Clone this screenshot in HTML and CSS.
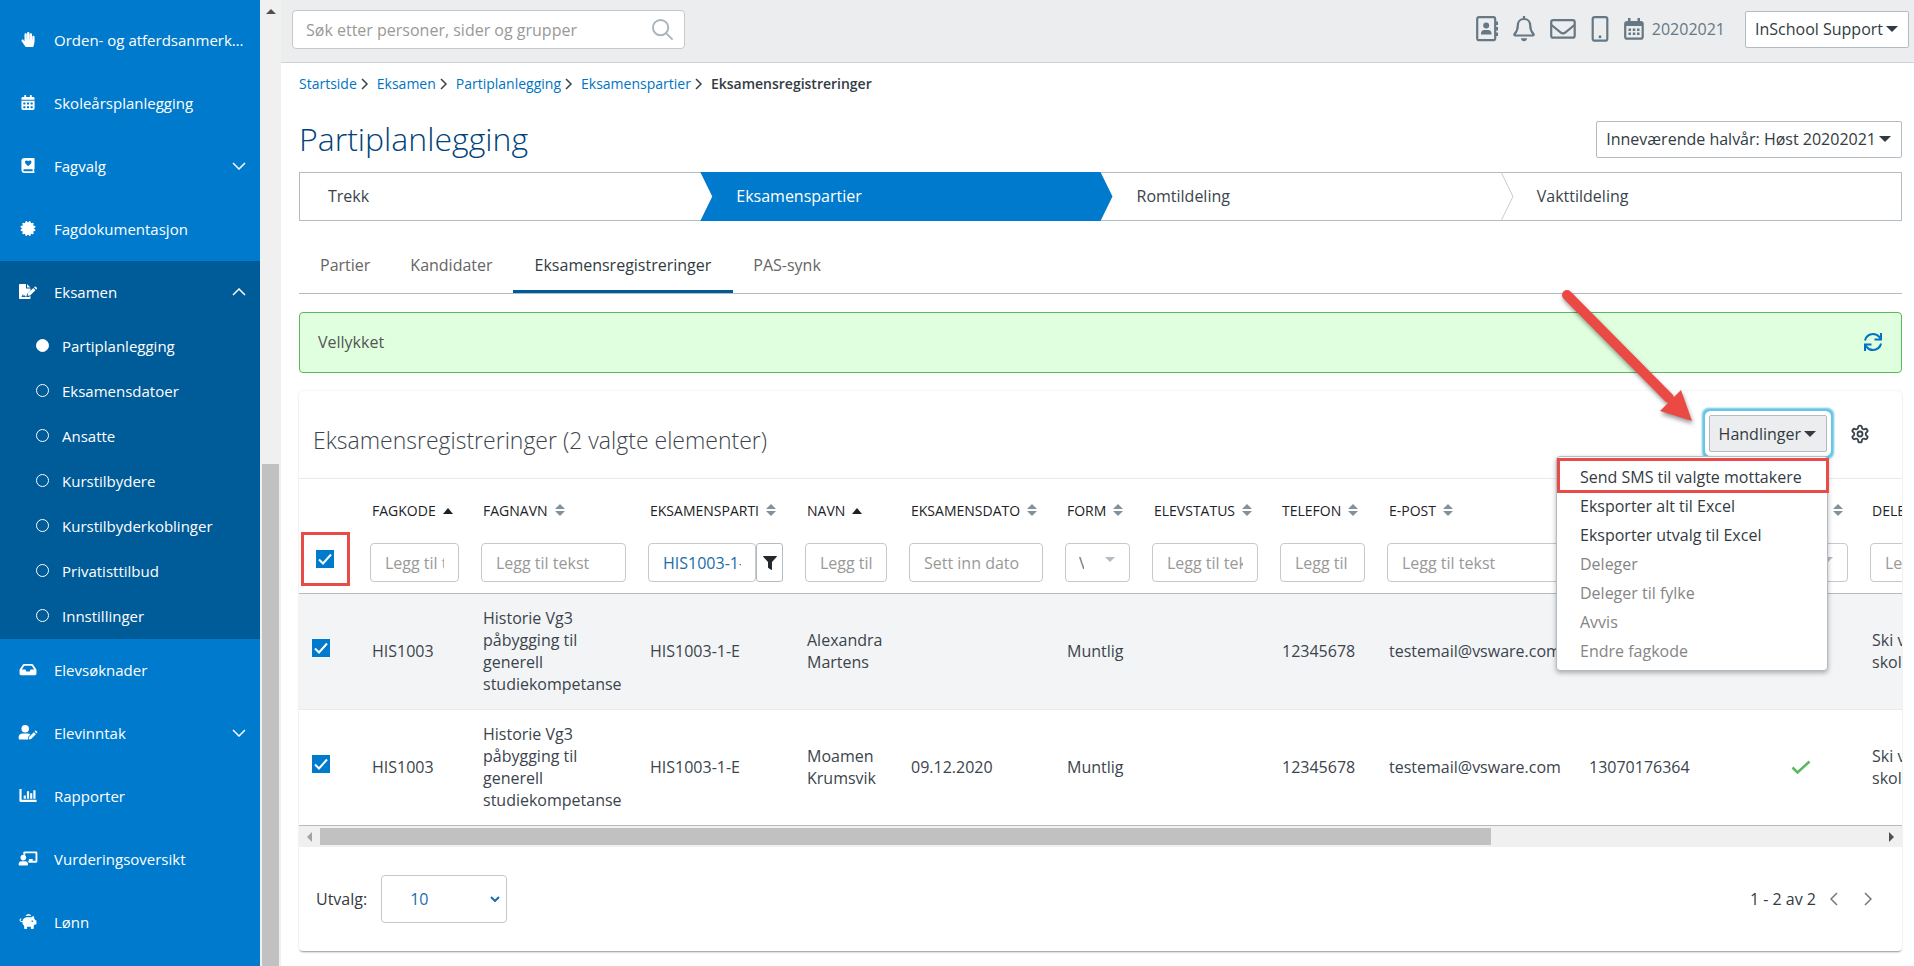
FILE: index.html
```html
<!DOCTYPE html>
<html lang="no">
<head>
    <meta charset="utf-8">
    <title>Partiplanlegging</title>
    <link rel="stylesheet" href="styles.css">
</head>
<body>
    <aside class="sidebar">
        <nav class="nav">
            <a class="nav-item" href="#">
                <svg class="nav-icon" viewBox="0 0 448 512"><path d="M408.781 128.007C386.356 127.578 368 146.36 368 168.79V256h-8V79.79c0-22.43-18.356-41.212-40.781-40.783C297.488 39.423 280 57.169 280 79v177h-8V40.79C272 18.36 253.644-.422 231.219.007 209.488.423 192 18.169 192 40v216h-8V80.79c0-22.43-18.356-41.212-40.781-40.783C121.488 40.423 104 58.169 104 80v235.992l-31.648-43.519c-12.993-17.866-38.009-21.817-55.877-8.823-17.865 12.994-21.815 38.01-8.822 55.877l125.601 172.705A48 48 0 0 0 172.073 512h197.59c22.274 0 41.622-15.324 46.724-37.006l26.508-112.66a192.011 192.011 0 0 0 5.104-43.975V168c.001-21.831-17.487-39.577-39.218-39.993z"/></svg>
                <span class="nav-label">Orden- og atferdsanmerkninger</span>
            </a>
            <a class="nav-item" href="#">
                <svg class="nav-icon" viewBox="0 0 448 512"><path d="M0 464c0 26.5 21.5 48 48 48h352c26.500 0 48-21.500 48-48V192H0zM64 256h72v64H64zm124 0h72v64h-72zm124 0h72v64h-72zM64 384h72v64H64zm124 0h72v64h-72zm124 0h72v64h-72zM400 64h-48V16c0-9-7-16-16-16h-32c-9 0-16 7-16 16v48H160V16c0-9-7-16-16-16h-32c-9 0-16 7-16 16v48H48C21 64 0 85 0 112v48h448v-48c0-27-21-48-48-48z" fill-rule="evenodd"/></svg>
                <span class="nav-label">Skoleårsplanlegging</span>
            </a>
            <a class="nav-item" href="#">
                <svg class="nav-icon" viewBox="0 0 448 512"><path d="M96 0h328c13 0 24 11 24 24v336c0 10-5 18-12 22-3 16-3 50 0 66 7 4 12 10 12 20v20c0 13-11 24-24 24H96c-53 0-96-43-96-96V96C0 43 43 0 96 0zm0 384c-42 0-42 64 0 64h286c-3-20-3-44 0-64zM240 272l84-86c24-25 23-66-4-89-23-20-58-16-80 6l-8 9-9-9c-22-22-57-26-80-6-27 23-28 64-4 89l84 86c5 5 12 5 17 0z" fill-rule="evenodd"/></svg>
                <span class="nav-label">Fagvalg</span>
                <svg class="nav-chevron" viewBox="0 0 14 8"><path d="M1 1l6 6 6-6"/></svg>
            </a>
            <a class="nav-item" href="#">
                <svg class="nav-icon" viewBox="0 0 512 512"><path d="M458.622 255.92l45.985-45.005c13.708-12.977 7.316-36.039-10.664-40.339l-62.65-15.99 17.661-62.015c4.991-17.838-11.829-34.663-29.661-29.671l-61.994 17.667-15.984-62.671C337.085.197 313.765-6.276 300.99 7.228L256 53.57 211.011 7.229c-12.63-13.351-36.047-7.234-40.325 10.668l-15.984 62.671-61.995-17.667C74.87 57.907 58.056 74.738 63.046 92.572l17.661 62.015-62.65 15.99C.069 174.878-6.31 197.944 7.392 210.915l45.985 45.005-45.985 45.004c-13.708 12.977-7.316 36.039 10.664 40.339l62.65 15.99-17.661 62.015c-4.991 17.838 11.829 34.663 29.661 29.671l61.994-17.667 15.984 62.671c4.439 18.575 27.696 24.018 40.325 10.668L256 458.61l44.989 46.001c12.5 13.488 35.987 7.486 40.325-10.668l15.984-62.671 61.994 17.667c17.836 4.994 34.651-11.837 29.661-29.671l-17.661-62.015 62.65-15.99c17.987-4.302 24.366-27.367 10.664-40.339l-45.984-45.004z"/></svg>
                <span class="nav-label">Fagdokumentasjon</span>
            </a>
            <div class="nav-group">
                <a class="nav-item" href="#">
                    <svg class="nav-icon" viewBox="0 0 18 15"><path d="M1 0h6v4.500h4.500v2L8 10l-.5 2.500-1 .2-.7-1.700-1 1.500-.8-2.500-1.500 3H9.500L11.500 12v2.200c0 .5-.3.800-.8.800H.8c-.5 0-.8-.3-.8-.8V.8C0 .3.300 0 1 0zM8 0l3.500 3.500H8zM15 3.300l2.200 2.200.6-.6c.4-.4.4-.8 0-1.100l-1.100-1.100c-.4-.4-.8-.4-1.100 0zM14.300 4l2.200 2.200-5.300 5.300-2.500.3.300-2.500z"/></svg>
                    <span class="nav-label">Eksamen</span>
                    <svg class="nav-chevron" viewBox="0 0 14 8"><path d="M1 7l6-6 6 6"/></svg>
                </a>
                <ul class="subnav">
                    <li><a class="current" href="#">Partiplanlegging</a></li>
                    <li><a href="#">Eksamensdatoer</a></li>
                    <li><a href="#">Ansatte</a></li>
                    <li><a href="#">Kurstilbydere</a></li>
                    <li><a href="#">Kurstilbyderkoblinger</a></li>
                    <li><a href="#">Privatisttilbud</a></li>
                    <li><a href="#">Innstillinger</a></li>
                </ul>
            </div>
            <a class="nav-item" href="#">
                <svg class="nav-icon" viewBox="0 0 576 512"><path d="M567.938 243.908L462.25 85.374A48.003 48.003 0 0 0 422.311 64H153.689a48 48 0 0 0-39.938 21.374L8.062 243.908A47.994 47.994 0 0 0 0 270.533V400c0 26.51 21.49 48 48 48h480c26.51 0 48-21.49 48-48V270.533a47.994 47.994 0 0 0-8.062-26.625zM162.252 128h251.497l85.333 128H376l-32 64H232l-32-64H76.918l85.334-128z"/></svg>
                <span class="nav-label">Elevsøknader</span>
            </a>
            <a class="nav-item" href="#">
                <svg class="nav-icon" viewBox="0 0 20 16"><circle cx="7" cy="4" r="4"/><path d="M4.200 9h5.600c1 0 2 .4 2.700 1L10.300 12.500 10 15.500H1.500C.7 15.500 0 15 0 14v-1c0-2.200 1.900-4 4.200-4zM16.200 7.600l2.200 2.200-5.100 5.200-2.500.4.300-2.600zM17 6.800l.7-.6c.3-.3.700-.3 1 0l1.100 1.100c.3.300.3.700 0 1l-.6.700z"/></svg>
                <span class="nav-label">Elevinntak</span>
                <svg class="nav-chevron" viewBox="0 0 14 8"><path d="M1 1l6 6 6-6"/></svg>
            </a>
            <a class="nav-item" href="#">
                <svg class="nav-icon" viewBox="0 0 16 14"><path d="M0 1h2v10h14v2H1c-.6 0-1-.4-1-1zM4 7h2v3H4zM7 3h2v7H7zM10 5h2v5h-2zM13 2h2v8h-2z"/></svg>
                <span class="nav-label">Rapporter</span>
            </a>
            <a class="nav-item" href="#">
                <svg class="nav-icon" viewBox="0 0 20 16"><circle cx="5" cy="7" r="3"/><path d="M3 11h4c1.700 0 3 1.300 3 3 0 1-.5 1.500-1 1.500H1c-.6 0-1-.5-1-1.500 0-1.700 1.300-3 3-3zM6 .5h12.500c.8 0 1.500.6 1.500 1.500v9c0 .8-.6 1.500-1.500 1.500H11l-1.300-2H11V8.500h4v2h3v-8H7v1.800c-.6-.3-1.300-.5-2-.5V2c0-.8.4-1.500 1-1.500z"/></svg>
                <span class="nav-label">Vurderingsoversikt</span>
            </a>
            <a class="nav-item" href="#">
                <svg class="nav-icon" viewBox="0 0 18 16"><path d="M6.500 2.200C7 .8 8.200 0 9.500 0s2.600.8 3 2.200c-2-.5-4-.5-6 0zM15.500 2.500v2.300c.6.600 1 1.200 1.300 1.900h.7c.3 0 .5.300.5.600v3.400c0 .3-.2.600-.5.600h-1.300c-.3.400-.7.800-1.100 1.100v2.900c0 .3-.2.600-.6.600h-2c-.3 0-.5-.3-.5-.6V13.500H8v1.800c0 .3-.2.600-.5.600h-2c-.3 0-.6-.3-.6-.6v-2.900C3.600 11.400 2.900 10 3 8.500 1.500 8.700 0 7.900 0 6.300 0 5.200.9 4.500 1.900 4.800v1c-.5-.2-1 .1-1 .6 0 .8 1 1.200 2.200 1C3.600 5 5.600 3.400 8 3.400h4.500c.7-.7 1.800-1 3-.9zM13.800 7a.8.8 0 1 0 0 1.500.8.8 0 0 0 0-1.500z"/></svg>
                <span class="nav-label">Lønn</span>
            </a>
        </nav>
        <div class="vscroll">
            <svg class="vscroll-arrow" viewBox="0 0 10 5"><path d="M0 5l5-5 5 5z"/></svg>
            <div class="vscroll-thumb"></div>
        </div>
    </aside>

    <div class="page">
        <header class="topbar">
            <form class="search">
                <input type="search" placeholder="Søk etter personer, sider og grupper" aria-label="Søk">
                <button type="button" aria-label="Søk">
                    <svg viewBox="0 0 24 24"><circle cx="10" cy="10" r="8"/><path d="M16 16l6.500 6.500"/></svg>
                </button>
            </form>
            <div class="tools">
                <a href="#" aria-label="Kontakter"><svg width="22" height="26" viewBox="0 0 22 26"><rect x="1.200" y="1.200" width="18" height="23" rx="2"/><path d="M20 5.500h2v3.500h-2zM20 11h2v3.500h-2zM20 16.500h2V20h-2z" class="solid"/><circle cx="10.200" cy="9.500" r="3" class="solid"/><path d="M5 18.500v-1.500c0-1.500 1.500-3 3-3h4.500c1.500 0 3 1.500 3 3v1.500z" class="solid"/></svg></a>
                <a href="#" aria-label="Varsler"><svg width="22" height="26" viewBox="0 0 22 26"><path d="M11 0v3M11 3C7 3 4.800 6 4.800 9.500c0 5-1.500 6.500-3.200 8.400-.6.700-.2 1.600.6 1.600h17.600c.8 0 1.200-.9.600-1.600-1.700-1.900-3.200-3.400-3.200-8.400C17.200 6 15 3 11 3z"/><path d="M8 22.300h6c0 1.700-1.400 3-3 3s-3-1.300-3-3z" class="solid"/></svg></a>
                <a href="#" aria-label="Meldinger"><svg width="26" height="20" viewBox="0 0 26 20"><rect x="1.200" y="1.200" width="23.500" height="17.500" rx="2"/><path d="M1.500 6l9 7.300c1.500 1.200 3.500 1.200 5 0l9-7.300"/></svg></a>
                <a href="#" aria-label="Mobil"><svg width="18" height="26" viewBox="0 0 18 26"><rect x="1.700" y="1.200" width="14.600" height="23.500" rx="2"/><circle cx="9" cy="20.800" r="1.500" class="solid"/></svg></a>
                <a class="year" href="#"><svg width="20" height="22" viewBox="0 0 20 22"><rect x="1.200" y="4" width="17.500" height="16.700" rx="2"/><path d="M1 4h18v4H1zM4 0h2.500v4H4zM13.500 0H16v4h-2.500zM4.500 10.500H7V13H4.500zM8.800 10.500h2.500V13H8.800zM13 10.500h2.500V13H13zM4.500 14.500H7V17H4.500zM8.800 14.500h2.500V17H8.800zM13 14.500h2.500V17H13z" class="solid"/></svg>20202021</a>
                <button class="btn" type="button">InSchool Support<span class="caret"></span></button>
            </div>
        </header>

        <main class="content">
            <nav class="crumbs" aria-label="Brødsmuler">
                <a href="#">Startside</a><svg viewBox="0 0 8 12"><path d="M1 1l5 5-5 5"/></svg>
                <a href="#">Eksamen</a><svg viewBox="0 0 8 12"><path d="M1 1l5 5-5 5"/></svg>
                <a href="#">Partiplanlegging</a><svg viewBox="0 0 8 12"><path d="M1 1l5 5-5 5"/></svg>
                <a href="#">Eksamenspartier</a><svg viewBox="0 0 8 12"><path d="M1 1l5 5-5 5"/></svg>
                <span>Eksamensregistreringer</span>
            </nav>

            <div class="heading">
                <h1>Partiplanlegging</h1>
                <button class="btn" type="button">Inneværende halvår: Høst 20202021<span class="caret"></span></button>
            </div>

            <ol class="steps">
                <li><a href="#">Trekk</a></li>
                <li class="active"><a href="#">Eksamenspartier</a></li>
                <li><a href="#">Romtildeling</a></li>
                <li><svg class="divider" viewBox="0 0 13 49"><path d="M0 0l12 24.500L0 49"/></svg><a href="#">Vakttildeling</a></li>
            </ol>

            <nav class="tabs">
                <a href="#">Partier</a>
                <a href="#">Kandidater</a>
                <a class="active" href="#">Eksamensregistreringer</a>
                <a href="#">PAS-synk</a>
            </nav>

            <div class="alert">
                <span>Vellykket</span>
                <button type="button" aria-label="Oppdater">
                    <svg viewBox="0 0 20 20"><path d="M2 8.500C2.600 4.800 6 2 10 2c2.600 0 5 1.200 6.500 3.200L18 7M18 11.500c-.6 3.700-4 6.500-8 6.500-2.600 0-5-1.200-6.500-3.200L2 13"/><path d="M18 1v6.500h-6.500M2 19v-6.500h6.500"/></svg>
                </button>
            </div>

            <section class="card">
                <div class="card-head">
                    <h2>Eksamensregistreringer (2 valgte elementer)</h2>
                    <div class="actions">
                        <button class="btn open" type="button">Handlinger<span class="caret"></span></button>
                        <ul class="menu">
                            <li class="marked"><button type="button">Send SMS til valgte mottakere</button></li>
                            <li><button type="button">Eksporter alt til Excel</button></li>
                            <li><button type="button">Eksporter utvalg til Excel</button></li>
                            <li><button type="button" disabled>Deleger</button></li>
                            <li><button type="button" disabled>Deleger til fylke</button></li>
                            <li><button type="button" disabled>Avvis</button></li>
                            <li><button type="button" disabled>Endre fagkode</button></li>
                        </ul>
                        <svg class="arrow" viewBox="0 0 140 140"><path d="M8 8l102 103" class="shaft"/><path d="M122 103l11 31-32-10z" class="head"/></svg>
                    </div>
                    <button class="gear" type="button" aria-label="Innstillinger">
                        <svg viewBox="0 0 24 24"><path d="M12.220 2h-.44a2 2 0 0 0-2 2v.18a2 2 0 0 1-1 1.730l-.43.25a2 2 0 0 1-2 0l-.15-.08a2 2 0 0 0-2.730.73l-.22.38a2 2 0 0 0 .73 2.730l.15.1a2 2 0 0 1 1 1.720v.51a2 2 0 0 1-1 1.740l-.15.09a2 2 0 0 0-.73 2.730l.22.38a2 2 0 0 0 2.730.73l.15-.08a2 2 0 0 1 2 0l.43.25a2 2 0 0 1 1 1.730V20a2 2 0 0 0 2 2h.44a2 2 0 0 0 2-2v-.18a2 2 0 0 1 1-1.730l.43-.25a2 2 0 0 1 2 0l.15.08a2 2 0 0 0 2.730-.73l.22-.39a2 2 0 0 0-.73-2.730l-.15-.08a2 2 0 0 1-1-1.740v-.5a2 2 0 0 1 1-1.740l.15-.09a2 2 0 0 0 .73-2.730l-.22-.38a2 2 0 0 0-2.730-.73l-.15.08a2 2 0 0 1-2 0l-.43-.25a2 2 0 0 1-1-1.730V4a2 2 0 0 0-2-2z"/><circle cx="12" cy="12" r="3"/></svg>
                    </button>
                </div>

                <div class="table-wrap">
                    <table>
                        <colgroup>
                            <col class="c-check"><col class="c-code"><col class="c-name"><col class="c-party"><col class="c-person">
                            <col class="c-date"><col class="c-form"><col class="c-status"><col class="c-phone"><col class="c-mail">
                            <col class="c-id"><col class="c-ok"><col class="c-deleg">
                        </colgroup>
                        <thead>
                            <tr class="labels">
                                <td></td>
                                <th>FAGKODE<i class="asc"></i></th>
                                <th>FAGNAVN<i class="sort"></i></th>
                                <th>EKSAMENSPARTI<i class="sort"></i></th>
                                <th>NAVN<i class="asc"></i></th>
                                <th>EKSAMENSDATO<i class="sort"></i></th>
                                <th>FORM<i class="sort"></i></th>
                                <th>ELEVSTATUS<i class="sort"></i></th>
                                <th>TELEFON<i class="sort"></i></th>
                                <th>E-POST<i class="sort"></i></th>
                                <th>FØDSELSNR<i class="sort"></i></th>
                                <th>OPPMELDT<i class="sort"></i></th>
                                <th>DELEGERT TIL<i class="sort"></i></th>
                            </tr>
                            <tr class="filters">
                                <td><span class="check-mark"><input type="checkbox" checked aria-label="Velg alle"></span></td>
                                <td><input type="text" placeholder="Legg til tekst" aria-label="Fagkode"></td>
                                <td><input type="text" placeholder="Legg til tekst" aria-label="Fagnavn"></td>
                                <td>
                                    <div class="filter-group">
                                        <input type="text" value="HIS1003-1-E" aria-label="Eksamensparti">
                                        <button type="button" aria-label="Filter"><svg viewBox="0 0 14 14"><path d="M.5 0h13c.5 0 .6.500.3.800L9 6v7.400c0 .5-.5.700-.9.400L5.400 12c-.3-.2-.4-.4-.4-.7V6L.2.800C-.1.500 0 0 .5 0z"/></svg></button>
                                    </div>
                                </td>
                                <td><input type="text" placeholder="Legg til tekst" aria-label="Navn"></td>
                                <td><input type="text" class="date" placeholder="Sett inn dato" aria-label="Eksamensdato"></td>
                                <td><div class="pick"><select aria-label="Form"><option>Velg</option></select></div></td>
                                <td><input type="text" placeholder="Legg til tekst" aria-label="Elevstatus"></td>
                                <td><input type="text" placeholder="Legg til tekst" aria-label="Telefon"></td>
                                <td><input type="text" placeholder="Legg til tekst" aria-label="E-post"></td>
                                <td><input type="text" placeholder="Legg til tekst" aria-label="Fødselsnr"></td>
                                <td><div class="pick"><select aria-label="Oppmeldt"><option>Velg</option></select></div></td>
                                <td><input type="text" placeholder="Legg til tekst" aria-label="Delegert til"></td>
                            </tr>
                        </thead>
                        <tbody>
                            <tr>
                                <td><input type="checkbox" checked aria-label="Velg Alexandra Martens"></td>
                                <td>HIS1003</td>
                                <td>Historie Vg3 påbygging til generell studiekompetanse</td>
                                <td>HIS1003-1-E</td>
                                <td>Alexandra Martens</td>
                                <td></td>
                                <td>Muntlig</td>
                                <td></td>
                                <td>12345678</td>
                                <td>testemail@vsware.com</td>
                                <td></td>
                                <td></td>
                                <td>Ski videregående<br>skole</td>
                            </tr>
                            <tr>
                                <td><input type="checkbox" checked aria-label="Velg Moamen Krumsvik"></td>
                                <td>HIS1003</td>
                                <td>Historie Vg3 påbygging til generell studiekompetanse</td>
                                <td>HIS1003-1-E</td>
                                <td>Moamen Krumsvik</td>
                                <td>09.12.2020</td>
                                <td>Muntlig</td>
                                <td></td>
                                <td>12345678</td>
                                <td>testemail@vsware.com</td>
                                <td>13070176364</td>
                                <td class="ok"><svg viewBox="0 0 20 14"><path d="M1.500 7.500L6.500 12.500 18.500 1.500"/></svg></td>
                                <td>Ski videregående<br>skole</td>
                            </tr>
                        </tbody>
                    </table>
                </div>

                <div class="hscroll">
                    <svg class="left" viewBox="0 0 5 10"><path d="M5 0L0 5l5 5z"/></svg>
                    <div class="hscroll-track"><div class="hscroll-thumb"></div></div>
                    <svg class="right" viewBox="0 0 5 10"><path d="M0 0l5 5-5 5z"/></svg>
                </div>

                <div class="card-foot">
                    <label for="pageSize">Utvalg:</label>
                    <div class="page-size">
                        <select id="pageSize"><option>10</option></select>
                        <svg viewBox="0 0 10 6"><path d="M1 1l4 4 4-4"/></svg>
                    </div>
                    <span class="range">1 - 2 av 2</span>
                    <button type="button" aria-label="Forrige"><svg viewBox="0 0 8 14"><path d="M7 1L1 7l6 6"/></svg></button>
                    <button type="button" aria-label="Neste"><svg viewBox="0 0 8 14"><path d="M1 1l6 6-6 6"/></svg></button>
                </div>
            </section>
        </main>
    </div>
</body>
</html>
```
FILE: styles.css
```css
* {
    box-sizing: border-box;
}

body {
    display: flex;
    height: 100vh;
    margin: 0;
    overflow: hidden;
    font-family: "Open Sans", "Noto Sans", sans-serif;
    font-size: 16px;
    line-height: 22px;
    color: #3b444c;
    background-color: #fff;
}

a {
    color: inherit;
    text-decoration: none;
}

button,
input,
select {
    font: inherit;
    color: inherit;
    margin: 0;
}

button {
    padding: 0;
    border: none;
    background: none;
    cursor: pointer;
}

ul,
ol {
    list-style: none;
    margin: 0;
    padding: 0;
}

svg {
    display: block;
    flex: none;
}

/* Sidebar */
.sidebar {
    display: flex;
    flex: none;
    width: 281px;
    color: #fff;
    font-size: 15px;
}

.nav {
    flex: 1;
    min-width: 0;
    padding-top: 9px;
    background-color: #007acc;
}

.nav-item {
    display: flex;
    align-items: center;
    height: 63px;
    padding: 0 14px 2px 18px;
}

.nav-icon {
    width: 20px;
    height: 15px;
    margin-right: 16px;
    fill: #fff;
}

.nav-label {
    flex: 1;
    overflow: hidden;
    white-space: nowrap;
    text-overflow: ellipsis;
}

.nav-chevron {
    width: 14px;
    height: 8px;
    fill: none;
    stroke: #fff;
    stroke-width: 1.5;
}

.nav-group {
    background-color: #005b99;
}

.subnav a {
    display: flex;
    align-items: center;
    height: 45px;
    padding: 0 0 2px 36px;
}

.subnav a::before {
    content: "";
    width: 11px;
    height: 11px;
    margin-right: 13px;
    border: 1px solid #fff;
    border-radius: 50%;
}

.subnav .current::before {
    background-color: #fff;
}

.vscroll {
    display: flex;
    flex-direction: column;
    align-items: center;
    width: 21px;
    background-color: #f0f0f0;
}

.vscroll-arrow {
    width: 10px;
    height: 5px;
    margin-top: 9px;
    fill: #505050;
}

.vscroll-thumb {
    width: 17px;
    height: 52%;
    margin-top: auto;
    background-color: #c1c1c1;
}

/* Top bar */
.page {
    flex: 1;
    min-width: 0;
}

.topbar {
    display: flex;
    justify-content: space-between;
    height: 63px;
    padding: 10px 5px 0 11px;
    border-bottom: 1px solid #ced3d7;
    background-color: #ecedef;
}

.search {
    display: flex;
    align-items: center;
    width: 393px;
    height: 39px;
    padding: 0 10px 0 13px;
    border: 1px solid #c5c9cc;
    border-radius: 4px;
    background-color: #fff;
}

.search input {
    flex: 1;
    padding: 0;
    border: none;
    outline: none;
    background: none;
}

input::placeholder {
    color: #999;
    opacity: 1;
}

.search svg {
    width: 23px;
    height: 23px;
    fill: none;
    stroke: #a9b4bc;
    stroke-width: 2;
}

.tools {
    display: flex;
    gap: 15px;
    align-items: center;
    height: 38px;
    color: #667884;
}

.tools svg {
    fill: none;
    stroke: #667884;
    stroke-width: 2.2;
}

.tools .solid {
    fill: #667884;
    stroke: none;
}

.year {
    display: flex;
    gap: 8px;
    align-items: center;
    margin-right: 5px;
}

.btn {
    display: flex;
    gap: 3px;
    align-items: center;
    height: 37px;
    padding: 0 10px 0 9px;
    border: 1px solid #b3bcc2;
    border-radius: 2px;
    background-color: #fff;
    color: #333b42;
    font-weight: 500;
    white-space: nowrap;
}

.caret {
    border: 6px solid transparent;
    border-top: 6px solid #333b42;
    border-bottom: none;
}

/* Content */
.content {
    padding: 10px 12px 0 18px;
}

.crumbs {
    display: flex;
    align-items: center;
    font-size: 14px;
    color: #0074c2;
}

.crumbs svg {
    width: 8px;
    height: 12px;
    margin: 0 8px 0 4px;
    fill: none;
    stroke: #3b444c;
    stroke-width: 1.5;
}

.crumbs span {
    color: #333b42;
    font-weight: 600;
}

.heading {
    display: flex;
    justify-content: space-between;
    align-items: center;
    height: 88px;
    margin-bottom: -11px;
}

h1 {
    margin: 0;
    font-size: 32px;
    font-weight: 300;
    line-height: 40px;
    color: #00427a;
}

.steps {
    display: grid;
    grid-template-columns: repeat(4, 1fr);
    height: 49px;
    border: 1px solid #b3bcc2;
}

.steps li {
    position: relative;
    display: flex;
    align-items: center;
    padding: 0 0 2px 36px;
}

.steps li:first-child {
    padding-left: 28px;
}

.steps .active {
    color: #fff;
    margin: -1px -12px -1px 0;
    background-color: #007acc;
    clip-path: polygon(0 0, calc(100% - 12px) 0, 100% 50%, calc(100% - 12px) 100%, 0 100%, 12px 50%);
}

.steps .divider {
    position: absolute;
    left: 0;
    top: -1px;
    width: 13px;
    height: 49px;
    fill: none;
    stroke: #c5ccd1;
}

.tabs {
    display: flex;
    height: 73px;
    padding-left: 1px;
    border-bottom: 1px solid #b3bcc2;
    color: #666;
}

.tabs a {
    padding: 33px 20px 0;
}

.tabs .active {
    padding: 33px 22px 0;
    color: #333b42;
    border-bottom: 3px solid #005b99;
}

.alert {
    display: flex;
    justify-content: space-between;
    align-items: center;
    height: 61px;
    margin-top: 18px;
    padding: 0 18px 2px;
    border: 1px solid #5cb85c;
    border-radius: 4px;
    background-color: #dfffdf;
    color: #555;
}

.alert svg {
    width: 20px;
    height: 20px;
    fill: none;
    stroke: #0074c2;
    stroke-width: 2;
}

/* Card */
.card {
    margin-top: 18px;
    border-radius: 4px;
    box-shadow: 0 2px 2px -1px rgba(0, 0, 0, 0.4), 0 0 2px rgba(0, 0, 0, 0.12);
}

.card-head {
    display: flex;
    align-items: center;
    height: 88px;
    padding: 0 32px 2px 14px;
    border-bottom: 1px solid #e9ebec;
}

h2 {
    flex: 1;
    margin: 12px 0 0;
    font-size: 23px;
    font-weight: 300;
}

.actions {
    position: relative;
    margin-right: 23px;
}

.open {
    background-color: #ecedef;
    box-shadow: 0 0 0 4px #fff, 0 0 2px 7px #66c5e3;
}

.menu {
    position: absolute;
    z-index: 2;
    right: -1px;
    top: 41px;
    width: 272px;
    height: 215px;
    padding: 5px 0;
    border: 1px solid #b3bcc2;
    border-radius: 4px;
    background-color: #fff;
    box-shadow: 0 2px 5px rgba(0, 0, 0, 0.3);
}

.menu li {
    position: relative;
}

.menu button {
    display: block;
    width: 100%;
    height: 29px;
    padding-left: 23px;
    text-align: left;
    color: #333b42;
}

.menu button:disabled {
    color: #858585;
}

.marked::after {
    content: "";
    position: absolute;
    inset: -4px -2px -2px 0;
    border: 3px solid #e84c48;
}

.arrow {
    position: absolute;
    z-index: 3;
    right: 128px;
    bottom: 25px;
    width: 140px;
    height: 140px;
    filter: drop-shadow(1px 3px 2px rgba(0, 0, 0, 0.4));
}

.shaft {
    stroke: #ea4a43;
    stroke-width: 10;
    stroke-linecap: round;
}

.head {
    fill: #ea4a43;
}

.gear svg {
    width: 20px;
    height: 20px;
    fill: none;
    stroke: #3b444c;
    stroke-width: 2.2;
}

/* Table */
.table-wrap {
    overflow: hidden;
    border-bottom: 1px solid #b3bcc2;
}

table {
    width: 2144px;
    table-layout: fixed;
    border-collapse: collapse;
}

.c-check { width: 60px; }
.c-code { width: 111px; }
.c-name { width: 167px; }
.c-party { width: 157px; }
.c-person { width: 104px; }
.c-date { width: 156px; }
.c-form { width: 87px; }
.c-status { width: 128px; }
.c-phone { width: 107px; }
.c-mail { width: 200px; }
.c-id { width: 164px; }
.c-ok { width: 119px; }

th,
td {
    padding: 13px 10px 14px 13px;
    text-align: left;
}

tbody td:first-child {
    padding-bottom: 20px;
}

.labels th {
    height: 53px;
    padding: 10px 0 0 13px;
    font-size: 14px;
    font-weight: 500;
    color: #1c2226;
    white-space: nowrap;
}

th i {
    display: inline-block;
    margin-left: 7px;
}

.asc {
    margin-bottom: 2px;
    border: 5px solid transparent;
    border-top: none;
    border-bottom: 6px solid #1c2226;
}

.sort::before,
.sort::after {
    content: "";
    display: block;
    border: 5px solid transparent;
}

.sort::before {
    border-top: none;
    border-bottom: 5px solid #84919a;
}

.sort::after {
    margin-top: 2px;
    border-bottom: none;
    border-top: 5px solid #84919a;
}

.filters td {
    padding: 11px;
    border-bottom: 1px solid #b3bcc2;
}

.filters td:first-child {
    padding: 0 0 2px 17px;
}

.filters input[type="text"],
.filters select {
    display: block;
    width: 100%;
    height: 39px;
    padding: 0 14px;
    border: 1px solid #c5c9cc;
    border-radius: 4px;
    background-color: #fff;
}

.filters .date {
    padding: 0 12px;
}

.filter-group {
    display: flex;
    color: #1b6ca8;
}

.filter-group button {
    display: flex;
    align-items: center;
    justify-content: center;
    flex: none;
    width: 27px;
    border: 1px solid #b3bcc2;
    border-radius: 3px;
}

.filter-group svg {
    width: 14px;
    height: 14px;
    fill: #22282c;
}

.pick {
    position: relative;
}

.filters select {
    appearance: none;
    padding: 0 45px 0 13px;
    color: #777;
}

.pick::after {
    content: "";
    position: absolute;
    right: 15px;
    top: 14px;
    border: 5px solid transparent;
    border-top: 5px solid #b3bcc2;
    border-bottom: none;
}

input[type="checkbox"] {
    appearance: none;
    display: block;
    width: 18px;
    height: 18px;
    background: #007acc url("data:image/svg+xml,%3Csvg xmlns='http://www.w3.org/2000/svg' viewBox='0 0 18 18'%3E%3Cpath d='M3 9.500l4 4 8-9' fill='none' stroke='white' stroke-width='2'/%3E%3C/svg%3E");
}

.check-mark {
    position: relative;
    display: inline-block;
}

.check-mark::after {
    content: "";
    position: absolute;
    inset: -18px -16px -18px -15px;
    border: 3px solid #e84c48;
}

tbody tr:first-child {
    background-color: #f3f4f6;
    border-bottom: 1px solid #e9ebec;
}

.ok svg {
    width: 20px;
    height: 14px;
    margin-left: 38px;
    fill: none;
    stroke: #5cb85c;
    stroke-width: 2.5;
}

.hscroll {
    display: flex;
    align-items: center;
    height: 21px;
    padding: 0 8px;
    background-color: #f0f0f0;
}

.hscroll svg {
    width: 5px;
    height: 10px;
    fill: #505050;
}

.hscroll .left {
    fill: #a3a3a3;
}

.hscroll-track {
    flex: 1;
    margin: 0 8px;
}

.hscroll-thumb {
    width: 75%;
    height: 17px;
    background-color: #c1c1c1;
}

.card-foot {
    display: flex;
    align-items: center;
    height: 104px;
    padding: 0 30px 0 17px;
    color: #333b42;
    font-weight: 500;
}

.page-size {
    position: relative;
    margin: 0 auto 0 14px;
}

.page-size select {
    appearance: none;
    display: block;
    width: 126px;
    height: 48px;
    padding: 0 28px;
    border: 1px solid #c5c9cc;
    border-radius: 4px;
    background-color: #fff;
    color: #1b6ca8;
}

.page-size svg {
    position: absolute;
    right: 7px;
    top: 21px;
    width: 10px;
    height: 6px;
    fill: none;
    stroke: #1b6ca8;
    stroke-width: 2;
}

.card-foot button {
    margin-left: 14px;
}

.card-foot button + button {
    margin-left: 26px;
}

.card-foot button svg {
    width: 8px;
    height: 14px;
    fill: none;
    stroke: #777;
    stroke-width: 1.5;
}
```
